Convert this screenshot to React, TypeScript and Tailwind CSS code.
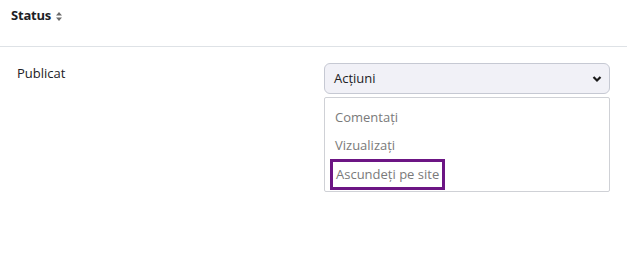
import React from "react";

function SortIcon() {
  return (
    <svg width="6" height="9" viewBox="0 0 6 9" className="ml-[5px] mt-[1px]">
      <path d="M3 0 L6 3.5 H0 Z" fill="#6b6b6b" />
      <path d="M3 9 L6 5.5 H0 Z" fill="#6b6b6b" />
    </svg>
  );
}

function Chevron() {
  return (
    <svg width="10" height="8" viewBox="0 0 10 8">
      <path d="M1.5 2 L5 5.5 L8.5 2" fill="none" stroke="#1a1a1a" strokeWidth="2.2" />
    </svg>
  );
}

export default function App() {
  return (
    <div
      className="w-[627px] h-[253px] bg-white text-[14px] text-[#1d2125]"
      style={{ fontFamily: '"Open Sans", "Noto Sans", sans-serif' }}
    >
      <div className="h-[47px] border-b border-[#dee2e6] flex items-start pl-[11px] pt-[6px]">
        <div className="flex items-center h-[20px]">
          <span className="font-bold text-[13px] tracking-[-0.2px]">Status</span>
          <SortIcon />
        </div>
      </div>
      <div className="flex pt-[16px]">
        <div className="w-[324px] pl-[17px] pt-[1px] text-[13px]">Publicat</div>
        <div className="w-[286px] flex flex-col">
          <div className="h-[31px] rounded-[6px] border border-[#c6c9d3] bg-[#f1f1f7] flex items-center justify-between pl-[9px] pr-[7px]">
            <span className="text-[13px]">Acțiuni</span>
            <Chevron />
          </div>
          <div className="mt-[3px] h-[95px] rounded-[2px] border border-[#cfd1d6] bg-white pl-[5px] pt-[6px] text-[13px] text-[#7a7a7a]">
            <div className="h-[28px] flex items-center pl-[5px]">Comentați</div>
            <div className="h-[28px] flex items-center pl-[5px]">Vizualizați</div>
            <div className="h-[31px] w-[115px] border-[3px] border-[#6c1584] flex items-center pl-[3px] -mt-[1px]">
              Ascundeți pe site
            </div>
          </div>
        </div>
      </div>
    </div>
  );
}
